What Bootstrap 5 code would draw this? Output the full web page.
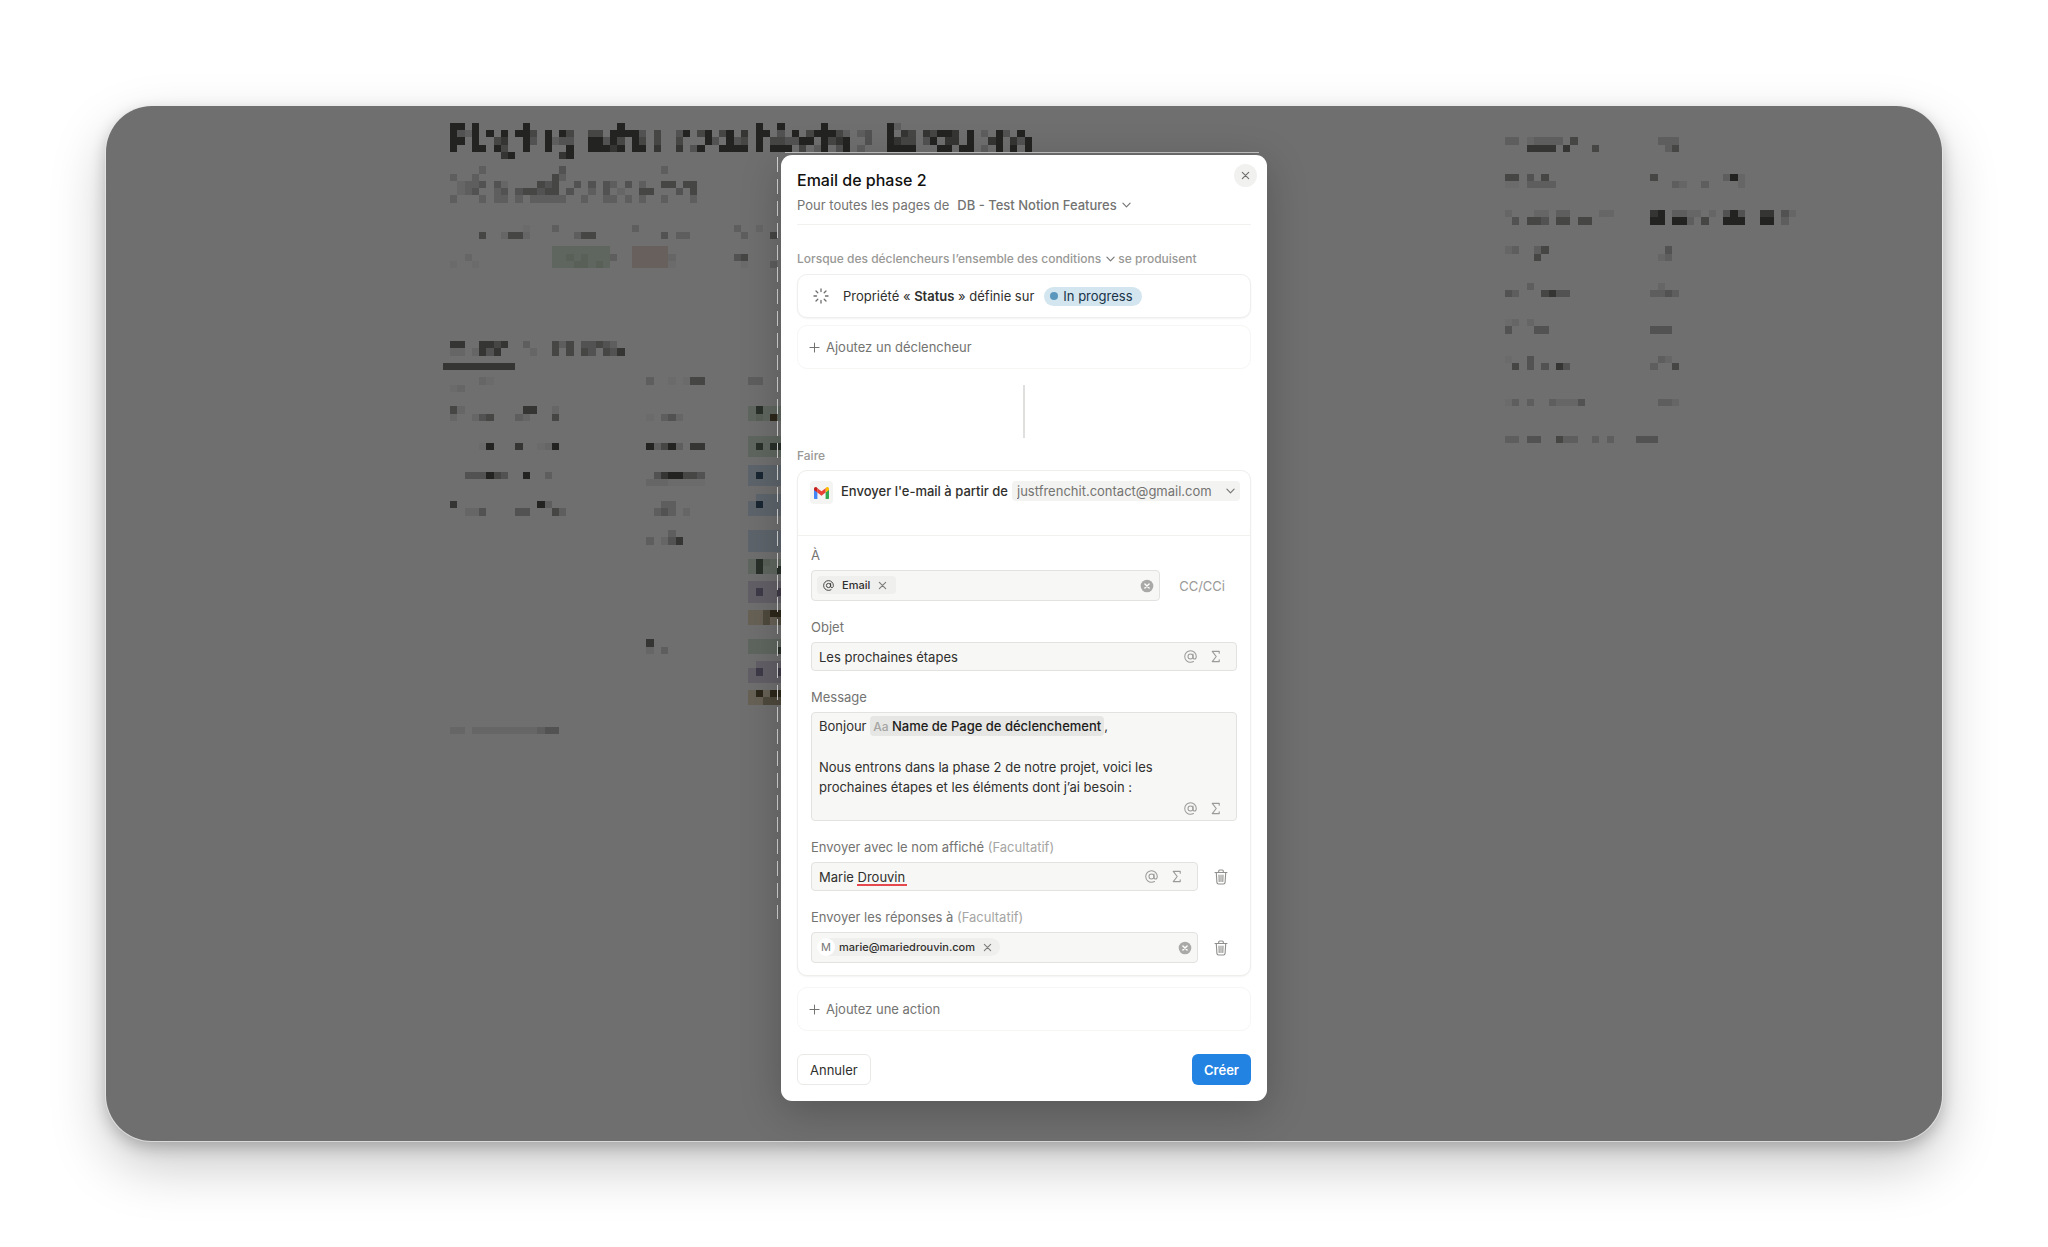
<!DOCTYPE html>
<html lang="fr">
<head>
<meta charset="utf-8">
<meta name="viewport" content="width=device-width, initial-scale=1">
<title>Email de phase 2</title>
<link href="https://cdn.jsdelivr.net/npm/bootstrap@5.3.0/dist/css/bootstrap.min.css" rel="stylesheet">
<style>
  body { font-family: Inter, "Liberation Sans", sans-serif; font-size: 13px; line-height: 20px; color: #2f2f2d; background: #fff; padding: 106px; }
  svg { flex: none; display: block; }
  .bare { border: 0; padding: 0; background: none; color: inherit; }
  .stage { background: #6f6f6f; border-radius: 46px; padding: 49px 16px 40px; box-shadow: 0 0 0 1px rgba(235,235,235,.7), 0 24px 56px rgba(0,0,0,.22), 0 6px 16px rgba(0,0,0,.22); }
  .mosaic { inset: 0; }
  .dialog-wrap { max-width: 486px; }
  .dialog-box { background: #fff; border-radius: 11px; padding: 15px 16px; box-shadow: 0 10px 40px rgba(0,0,0,.22); }
  .guide { left: -4px; top: 2px; width: 1px; height: 762px; background: repeating-linear-gradient(#d5d5d5 0 15px, transparent 15px 22px); }
  .guide-top { left: 4px; right: 8px; top: -3px; height: 1px; background: #c4c4c4; }
  .dlg-title { font-size: 16px; line-height: 20px; font-weight: 500; color: #111110; }
  .soft { color: #737371; }
  .faint { color: #a5a5a3; }
  .note { font-size: 12px; line-height: 16px; font-weight: 500; color: #989896; }
  .close-btn { top: 9px; right: 10px; width: 23px; height: 23px; background: #f1f1f0; color: #6f6f6d; }
  .pick { appearance: none; border: 0; color: inherit; font-weight: 500; background: transparent url("data:image/svg+xml,%3Csvg xmlns='http://www.w3.org/2000/svg' viewBox='0 0 10 6'%3E%3Cpath d='M1 1l4 4 4-4' fill='none' stroke='%23777775' stroke-width='1.3' stroke-linecap='round' stroke-linejoin='round'/%3E%3C/svg%3E") no-repeat right 0 center / 9px 6px; padding: 0 14px 0 0; }
  .pick-fill { background-color: #f3f3f2; background-position: right 5px center; border-radius: 4px; padding: 0 28px 0 5px; height: 20px; color: #737371; font-weight: 400; }
  .scope { margin-top: 5px; line-height: 20px; }
  .divider { height: 1px; background: #f1f1f0; margin-top: 9px; }
  .cond-line { margin-top: 26px; gap: 3px; }
  .panel { border: 1px solid #eeeeed; border-radius: 10px; background: #fff; }
  .panel-line { height: 44px; padding: 0 11px; gap: 6px; }
  .panel-soft { border-color: #f6f6f5; }
  .panel-on { box-shadow: 0 1px 2px rgba(0,0,0,.05); }
  .stack { margin-top: 7px; }
  .icon-cell { width: 24px; }
  .tag-pill { background: #d3e5ef; color: #183347; border-radius: 10px; padding: 0 9px 0 6px; line-height: 19px; gap: 5px; margin-left: 4px; }
  .tag-dot { width: 8px; height: 8px; background: #5b97bd; }
  .connector { width: 2px; height: 53px; background: #dfdfde; margin-top: 16px; }
  .do-title { margin-top: 10px; }
  .action-panel { margin-top: 6px; }
  .app-tile { width: 23px; height: 23px; background: #f4f4f3; border-radius: 4px; }
  .action-head { height: 65px; padding: 10px 10px 0 12px; border-bottom: 1px solid #f1f1f0; }
  .action-body { padding: 9px 13px 12px; }
  .field-block { margin-top: 16px; }
  .field-line { margin-top: 5px; }
  .field-box { background: #f7f7f5; border: 1px solid #e2e2e0; border-radius: 4px; }
  .field-box input { min-width: 0; width: 0; outline: 0; height: 27px; }
  .text-box { padding: 0 14px 0 7px; }
  .token-box { height: 31px; padding: 5px; }
  .token-chip { background: #efefee; border-radius: 4px; font-size: 11px; font-weight: 500; line-height: 18px; height: 18px; padding: 0 9px 0 6px; }
  .token-round { border-radius: 9px; padding: 0 8px 0 0; }
  .avatar-m { width: 18px; height: 18px; background: #fff; color: #777; font-weight: 400; }
  .chip-x { color: #7d7d7b; }
  .msg-box { outline: 0; padding: 3px 7px; min-height: 109px; }
  .msg-chip { background: #e6e6e4; border-radius: 4px; padding: 2px 3px; color: #1c1c1b; font-weight: 500; }
  .chip-kind { font-size: 12px; }
  .tools { gap: 12px; color: #9a9a98; }
  .msg-tools { right: 15px; bottom: 6px; }
  .cc-btn { padding: 0 12px 0 19px; color: #9a9a98; }
  .bin-btn { padding: 0 9px 0 16px; color: #8f8f8d; }
  .spell { background: linear-gradient(#e5484d, #e5484d) no-repeat 38px 21px / 50px 2px; }
  .add-action { margin-top: 11px; }
  .foot { margin: 23px 0 1px; }
  .act { height: 31px; border-radius: 6px; font-size: 13px; line-height: 20px; padding: 0 12px; }
  .act-plain { border: 1px solid #e9e9e7; background: #fff; color: #2f2f2d; }
  .act-main { background: #2383e2; color: #fff; border: 0; font-weight: 600; }
</style>
</head>
<body>
<svg width="0" height="0" class="position-absolute" aria-hidden="true">
  <defs>
    <symbol id="i-at" viewBox="1 1 14 14"><circle cx="8" cy="8" r="2.7" fill="none" stroke="currentColor" stroke-width="1.1"/><path d="M10.700 5.300V9c0 1.200.7 1.800 1.600 1.800 1.100 0 1.900-1 1.900-2.800A6.200 6.200 0 1 0 8 14.200c1.200 0 2.300-.3 3.200-.8" fill="none" stroke="currentColor" stroke-width="1.100" stroke-linecap="round"/></symbol>
    <symbol id="i-sum" viewBox="1 1 14 14"><path d="M12 4.500V2.500H4.500L8.800 8l-4.300 5.500H12v-2" fill="none" stroke="currentColor" stroke-width="1.200" stroke-linejoin="round" stroke-linecap="round"/></symbol>
    <symbol id="i-x" viewBox="0 0 10 10"><path d="M1.500 1.500l7 7M8.500 1.500l-7 7" fill="none" stroke="currentColor" stroke-width="1.300" stroke-linecap="round"/></symbol>
    <symbol id="i-plus" viewBox="0 0 12 12"><path d="M6 1v10M1 6h10" fill="none" stroke="currentColor" stroke-width="1.100" stroke-linecap="round"/></symbol>
    <symbol id="i-clear" viewBox="0 0 14 14"><circle cx="7" cy="7" r="6.300" fill="#a9a9a7"/><path d="M4.900 4.900l4.200 4.200M9.100 4.900L4.900 9.100" stroke="#fff" stroke-width="1.400" stroke-linecap="round"/></symbol>
    <symbol id="i-bin" viewBox="0 0 14 16"><path d="M1 3.500h12M4.700 3.300V2c0-.6.4-1 1-1h2.600c.6 0 1 .4 1 1v1.300M2.300 3.700l.6 9.700c.1 1 .7 1.600 1.600 1.600h5c.9 0 1.500-.6 1.600-1.600l.6-9.700M5 6l.2 6.500M7 6v6.500M9 6l-.2 6.500" fill="none" stroke="currentColor" stroke-width="1.100" stroke-linecap="round"/></symbol>
  </defs>
</svg>

<main class="stage position-relative">
  <svg class="mosaic position-absolute w-100 h-100" viewBox="0 0 1836 1035" preserveAspectRatio="xMidYMin slice" shape-rendering="crispEdges" aria-hidden="true"><g id="cells" transform="translate(344 16.700) scale(7.275)"></g></svg>

  <div class="dialog-wrap mx-auto position-relative">
    <div class="guide position-absolute"></div>
    <div class="guide-top position-absolute"></div>
    <form class="dialog-box position-relative">
      <button type="button" class="bare close-btn position-absolute rounded-circle d-flex align-items-center justify-content-center" aria-label="Fermer"><svg width="9" height="9"><use href="#i-x"/></svg></button>
      <h1 class="dlg-title mb-0">Email de phase 2</h1>
      <div class="soft scope d-flex align-items-center gap-2">
        <label for="db">Pour toutes les pages de</label>
        <select id="db" class="pick"><option>DB - Test Notion Features</option></select>
      </div>
      <div class="divider"></div>

      <div class="note cond-line d-flex align-items-center">
        <label for="cond">Lorsque des déclencheurs</label>
        <select id="cond" class="pick"><option>l’ensemble des conditions</option></select>
        <span>se produisent</span>
      </div>

      <div class="panel panel-on panel-line stack d-flex align-items-center">
        <span class="icon-cell d-flex justify-content-center"><svg width="16" height="16" viewBox="0 0 16 16" stroke="#6d6d6b" stroke-width="1.300" stroke-linecap="round"><path d="M8 1v2.500M8 12.500V15M1 8h2.500M12.500 8H15M3 3l1.800 1.800M11.200 11.200L13 13M3 13l1.800-1.800M11.200 4.800L13 3"/></svg></span>
        <span class="ps-1">Propriété « <b class="fw-semibold">Status</b> » définie sur</span>
        <span class="tag-pill d-inline-flex align-items-center"><span class="tag-dot rounded-circle"></span>In progress</span>
      </div>
      <button type="button" class="panel panel-soft panel-line stack w-100 d-flex align-items-center soft"><svg width="11" height="11"><use href="#i-plus"/></svg>Ajoutez un déclencheur</button>

      <div class="connector mx-auto"></div>

      <h2 class="note do-title mb-0">Faire</h2>

      <section class="panel panel-on action-panel">
        <div class="action-head d-flex align-items-start">
          <span class="app-tile d-flex align-items-center justify-content-center me-2"><svg width="15" height="12" viewBox="0 0 15 12"><path d="M0 2v9c0 .6.4 1 1 1h2.400V5.500z" fill="#4285f4"/><path d="M15 2v9c0 .6-.4 1-1 1h-2.400V5.500z" fill="#34a853"/><path d="M11.600 1.300v4.300L15 3V1.800c0-1.500-1.600-2.300-2.800-1.400z" fill="#fbbc04"/><path d="M3.400 5.600V1.200L7.500 4.300l4.100-3.100v4.400L7.500 8.700z" fill="#ea4335"/><path d="M0 1.800V3l3.400 2.600V1.300L2.800.4C1.600-.5 0 .3 0 1.800z" fill="#c5221f"/></svg></span>
          <label for="from" class="fw-medium">Envoyer l'e-mail à partir de</label>
          <select id="from" class="pick pick-fill ms-auto"><option>justfrenchit.contact@gmail.com</option></select>
        </div>

        <div class="action-body">
          <label class="soft d-block" for="to">À</label>
          <div class="field-line d-flex align-items-center">
            <div class="field-box token-box flex-grow-1 d-flex align-items-start">
              <span class="token-chip d-inline-flex align-items-center gap-2"><svg width="11" height="11"><use href="#i-at"/></svg>Email<button type="button" class="bare chip-x" aria-label="Retirer Email"><svg width="9" height="9"><use href="#i-x"/></svg></button></span>
              <input id="to" class="bare flex-grow-1 h-auto" type="text">
              <button type="button" class="bare align-self-center" aria-label="Effacer"><svg width="14" height="14"><use href="#i-clear"/></svg></button>
            </div>
            <button type="button" class="bare cc-btn">CC/CCi</button>
          </div>

          <label class="soft d-block field-block" for="subject">Objet</label>
          <div class="field-box text-box field-line d-flex align-items-center">
            <input id="subject" class="bare flex-grow-1" type="text" value="Les prochaines étapes">
            <span class="tools d-flex"><button type="button" class="bare" aria-label="Mention"><svg width="13" height="13"><use href="#i-at"/></svg></button><button type="button" class="bare" aria-label="Formule"><svg width="13" height="13"><use href="#i-sum"/></svg></button></span>
          </div>

          <div class="soft field-block" id="msg-label">Message</div>
          <div class="position-relative field-line">
            <div class="field-box msg-box" role="textbox" aria-multiline="true" aria-labelledby="msg-label" contenteditable="true" spellcheck="false">Bonjour <span class="msg-chip"><span class="faint chip-kind">Aa</span> Name de Page de déclenchement</span>,<br><br>Nous entrons dans la phase 2 de notre projet, voici les<br>prochaines étapes et les éléments dont j’ai besoin :</div>
            <span class="tools msg-tools position-absolute d-flex"><button type="button" class="bare" aria-label="Mention"><svg width="13" height="13"><use href="#i-at"/></svg></button><button type="button" class="bare" aria-label="Formule"><svg width="13" height="13"><use href="#i-sum"/></svg></button></span>
          </div>

          <label class="soft d-block field-block" for="sender">Envoyer avec le nom affiché <span class="faint">(Facultatif)</span></label>
          <div class="d-flex align-items-center field-line">
            <div class="field-box text-box flex-grow-1 d-flex align-items-center">
              <input id="sender" class="bare spell flex-grow-1" type="text" value="Marie Drouvin">
              <span class="tools d-flex"><button type="button" class="bare" aria-label="Mention"><svg width="13" height="13"><use href="#i-at"/></svg></button><button type="button" class="bare" aria-label="Formule"><svg width="13" height="13"><use href="#i-sum"/></svg></button></span>
            </div>
            <button type="button" class="bare bin-btn" aria-label="Supprimer"><svg width="14" height="16"><use href="#i-bin"/></svg></button>
          </div>

          <label class="soft d-block field-block" for="reply">Envoyer les réponses à <span class="faint">(Facultatif)</span></label>
          <div class="d-flex align-items-center field-line">
            <div class="field-box token-box flex-grow-1 d-flex align-items-start">
              <span class="token-chip token-round d-inline-flex align-items-center"><span class="avatar-m rounded-circle text-center">M</span><span class="ms-1 me-2">marie@mariedrouvin.com</span><button type="button" class="bare chip-x" aria-label="Retirer marie@mariedrouvin.com"><svg width="9" height="9"><use href="#i-x"/></svg></button></span>
              <input id="reply" class="bare flex-grow-1 h-auto" type="text">
              <button type="button" class="bare align-self-center" aria-label="Effacer"><svg width="14" height="14"><use href="#i-clear"/></svg></button>
            </div>
            <button type="button" class="bare bin-btn" aria-label="Supprimer"><svg width="14" height="16"><use href="#i-bin"/></svg></button>
          </div>
        </div>
      </section>

      <button type="button" class="panel panel-soft panel-line add-action w-100 d-flex align-items-center soft"><svg width="11" height="11"><use href="#i-plus"/></svg>Ajoutez une action</button>

      <div class="d-flex justify-content-between foot">
        <button type="button" class="btn act act-plain">Annuler</button>
        <button type="submit" class="btn act act-main">Créer</button>
      </div>
    </form>
  </div>
</main>
<script src="https://cdn.jsdelivr.net/npm/bootstrap@5.3.0/dist/js/bootstrap.bundle.min.js"></script>
<script>
  // Colour of each mosaic letter or digit.
  const shade = { 1: '#6b6b6b', 2: '#666666', 3: '#5e5e5e', 4: '#525252', 5: '#464645', 6: '#353533', 7: '#232321',
    g: '#5f665f', n: '#586058', G: '#29302a', r: '#67605d', b: '#5d646b', B: '#1a2633', p: '#625f66', P: '#3f3a47', t: '#676156', T: '#4f493d', K: '#2c2719' };
  // Row, first column, run of cells.
  const runs = [
    [0, 0, '77.7......7............7..................7..7.....7........73'],
    [1, 0, '7437.7.7.775.7.75..55.77774.5..47.57.57.6.77.4.7.577753.34..7.65.65776.7.3.74.7'],
    [2, 0, '77.7..56..74.7344..77475.75.5..5...74.745.7.554477.7567..4..7655.47.66.7..67.647'],
    [3, 0, '7..77.75.7.7..7..7.77767.77.6..6.47..7777.7.777.5.37.47.3...7777...77.77.3.7.7.7'.replace('7..77.75.7.7..7..7.777', '7..77.75..7..7..7..777')],
    [4, 7, '67......67'],
    [6, 4, '3..........4.............3'], [7, 0, '3..3..........53'],
    [8, 1, '2334.42....545..4.4.43.4.3..55.55'], [9, 1, '234..34.4554.5.4..3.4.2..55...4'],
    [10, 0, '3...3.33.3.33333..3..33.3.3..3...3'], [9, 13, '5'], [9, 33, '5'],
    [14, 10, '1...3..........3.............3..2'], [15, 4, '5..2552......355.........4.33.......3...5'],
    [17, 14, 'gggggggg...rrrrr'], [18, 14, 'ggngnggg3..rrrrr2'], [19, 14, 'gggnngng...rrrrr1'],
    [18, 2, '2'], [18, 39, '45'], [19, 0, '1..1'], [19, 40, '1...3'],
    [30, 0, '66..6656..3...535.44543'], [31, 0, '22.2646....2..5.5.54.546'], [33, -1, '6666666666'],
    [35, 4, '21'], [35, 27, '3..1.155......33'], [36, 0, '12'],
    [39, 0, '52........66..2'], [40, 0, '2..245...32...5'], [40, 27, '1.342'],
    [39, 41, 'gGggg'], [40, 41, 'gngKg'],
    [44, 4, '17...6..12'], [44, 14, '7'], [44, 27, '73573.66'],
    [43, 41, 'ggggg'], [44, 41, 'gGgGG'], [45, 41, 'ggggg'],
    [48, 2, '444754..7..3'], [48, 28, '4677554'], [49, 27, '22211111'],
    [47, 41, 'bbbbb'], [48, 41, 'bBbbb'], [49, 41, 'bbbbb'],
    [52, 0, '6...........73'], [53, 2, '224....44...53'], [52, 29, '33'], [53, 28, '343.2'],
    [51, 42, 'bbbb'], [52, 41, 'bBbbb'], [53, 41, 'bbbbb'],
    [56, 30, '3'], [57, 27, '3.246'], [56, 41, 'bbbbb'], [57, 41, 'bbbbb'], [58, 41, 'bbbbb'],
    [60, 41, 'gGngg'], [61, 41, 'gGggG'], [63, 41, 'ppppp'], [64, 41, 'pPppP'], [65, 41, 'ppppp'],
    [67, 41, 'ttTKK'], [68, 41, 'ttTtT'], [71, 41, 'ggggg'], [72, 41, 'ggggG'], [71, 27, '6'], [72, 27, '2.3'],
    [74, 42, 'pppp'], [75, 41, 'pPppP'], [76, 41, 'ppppp'], [78, 41, 'tKtKK'], [79, 41, 'ttTTT'],
    [83, 0, '22.22222222234'], [83, 14, '4'],
    [2, 145, '33.23333.5...........333'], [3, 148, '6666.6...5.........35'],
    [7, 145, '55.4.5..............5.........37'], [7, 177, '2'], [8, 145, '11.3333................32..3....2'],
    [12, 145, '2...22.33....22.....67.3322.2.4'], [12, 176, '74'], [12, 180, '66.42'],
    [13, 146, '4.554.55.55........77.773.5..777..77.3'],
    [17, 145, '23..35................4'], [18, 149, '5................23'],
    [22, 148, '3.................2'], [23, 145, '43...5644...........3343'],
    [27, 145, '12.2'], [28, 145, '4...44..............444'],
    [32, 145, '1..4.................32'], [33, 146, '5.4.4.64...........3..5'],
    [38, 145, '13.3..32224..........332'], [43, 145, '33.44..533..3.3...444']
  ];
  const NS = 'http://www.w3.org/2000/svg', box = document.getElementById('cells');
  for (const [row, col, run] of runs) [...run].forEach((ch, i) => {
    if (!shade[ch]) return;
    const r = document.createElementNS(NS, 'rect');
    r.setAttribute('x', col + i); r.setAttribute('y', row);
    r.setAttribute('width', 1); r.setAttribute('height', 1);
    r.setAttribute('fill', shade[ch]);
    box.append(r);
  });
</script>
</body>
</html>
